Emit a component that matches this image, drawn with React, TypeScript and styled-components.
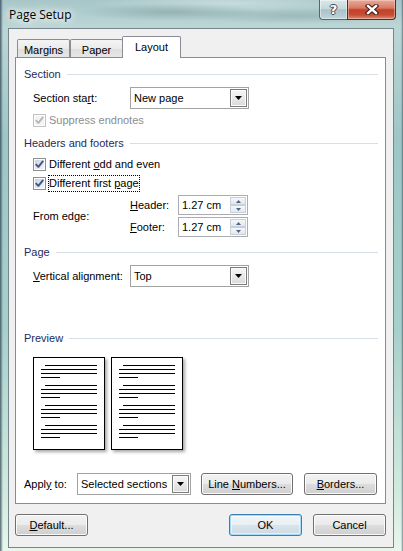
import React from 'react'
import styled, { createGlobalStyle, css } from 'styled-components'

const GlobalStyle = createGlobalStyle`
    html, body {
        margin: 0;
        padding: 0;
        background: #9fc3c5;
    }
    body {
        font-family: 'Liberation Sans', Arial, sans-serif;
        font-size: 11px;
        color: #000;
    }
    * {
        box-sizing: border-box;
    }
`

const Window = styled.div`
    width: 403px;
    height: 551px;
    display: flex;
    flex-direction: column;
    overflow: hidden;
    background:
        linear-gradient(90deg, rgba(35, 55, 75, 0.75) 0, rgba(35, 55, 75, 0) 3px),
        linear-gradient(270deg, rgba(35, 55, 75, 0.55) 0, rgba(35, 55, 75, 0) 2px),
        radial-gradient(ellipse 90px 9px at 170px 12px, rgba(80, 110, 115, 0.28), transparent),
        radial-gradient(ellipse 110px 8px at 300px 16px, rgba(80, 110, 115, 0.22), transparent),
        radial-gradient(ellipse 140px 10px at 230px 3px, rgba(255, 255, 255, 0.35), transparent),
        linear-gradient(180deg, #a6c6c8 0%, #bcd6d5 5%, #9ec6c5 25%, #a8d0cb 60%, #d2ebde 90%, #e8f6eb 100%);
`

const TitleBar = styled.div`
    height: 28px;
    flex: none;
    display: flex;
    justify-content: space-between;
    align-items: flex-start;
    padding: 0 7px 0 9px;
`

const Title = styled.span`
    margin-top: 6px;
    font-family: 'Open Sans', 'Noto Sans', sans-serif;
    font-size: 12px;
    color: #000;
    text-shadow: 0 0 6px #fff, 0 0 10px #fff, 0 0 14px rgba(255, 255, 255, 0.9);
`

const CaptionButtons = styled.div`
    display: flex;
`

const CaptionButton = styled.div<{ $close?: boolean }>`
    height: 20px;
    display: flex;
    align-items: center;
    justify-content: center;
    border: 1px solid #56656f;
    border-top: none;
    ${(p) =>
        p.$close
            ? css`
                  width: 49px;
                  border-color: #5a2a22;
                  border-radius: 0 0 4px 0;
                  background: linear-gradient(
                      180deg,
                      #e7ab9c 0%,
                      #d97a63 42%,
                      #c3412a 52%,
                      #c64c33 78%,
                      #dc8a73 100%
                  );
                  box-shadow: inset 0 0 0 1px rgba(255, 220, 210, 0.45);
              `
            : css`
                  width: 28px;
                  border-right: none;
                  border-radius: 0 0 0 4px;
                  background: linear-gradient(
                      180deg,
                      #dce8ea 0%,
                      #c5d7db 45%,
                      #a9c2c8 52%,
                      #bed5d9 100%
                  );
                  box-shadow: inset 0 0 0 1px rgba(255, 255, 255, 0.45);
              `}
`

const HelpGlyph = styled.span`
    font-family: 'DejaVu Sans', sans-serif;
    font-weight: bold;
    font-size: 13px;
    color: #fff;
    margin-top: -1px;
    text-shadow: 1px 0 #3a4d5a, -1px 0 #3a4d5a, 0 1px #3a4d5a, 0 -1px #3a4d5a;
`

const FrameBody = styled.div`
    flex: 1;
    display: flex;
    padding: 0 9px 4px 8px;
`

const Client = styled.div`
    flex: 1;
    display: flex;
    flex-direction: column;
    background: #f0f0f0;
    border: 1px solid #76868e;
    padding: 7px 7px 11px 6px;
`

const TabRow = styled.div`
    height: 21px;
    display: flex;
    align-items: flex-end;
    padding-left: 2px;
    position: relative;
    z-index: 1;
`

const Tab = styled.div<{ $w: number; $active?: boolean }>`
    width: ${(p) => p.$w}px;
    height: 18px;
    flex: none;
    display: flex;
    align-items: center;
    justify-content: center;
    padding-top: 2px;
    border: 1px solid #898c95;
    border-bottom: none;
    border-radius: 2px 2px 0 0;
    background: linear-gradient(180deg, #f4f4f4 0%, #ebebeb 50%, #dedede 51%, #e6e6e6 100%);
    ${(p) =>
        p.$active &&
        css`
            height: 22px;
            margin-left: -1px;
            margin-bottom: -1px;
            padding-top: 0;
            padding-bottom: 2px;
            background: #fff;
        `}
`

const Panel = styled.div`
    height: 447px;
    flex: none;
    display: flex;
    flex-direction: column;
    background: #fff;
    border: 1px solid #898c95;
    padding: 9px 7px 0 8px;
`

const Heading = styled.div<{ $mt: number }>`
    height: 14px;
    display: flex;
    align-items: center;
    margin-top: ${(p) => p.$mt}px;
    color: #1c2c5c;

    &::after {
        content: '';
        flex: 1;
        height: 1px;
        margin-left: 6px;
        background: #d5dfe5;
    }
`

const FieldRow = styled.div<{ $mt: number; $indent?: number }>`
    display: flex;
    align-items: center;
    margin-top: ${(p) => p.$mt}px;
    padding-left: ${(p) => p.$indent ?? 9}px;
`

const FieldLabel = styled.span<{ $w: number; $disabled?: boolean }>`
    width: ${(p) => p.$w}px;
    flex: none;
    color: ${(p) => (p.$disabled ? '#8d8d8d' : '#000')};
`

const Combo = styled.div<{ $w: number }>`
    width: ${(p) => p.$w}px;
    height: 22px;
    flex: none;
    display: flex;
    align-items: stretch;
    border: 1px solid #a2a2a2;
    background: #fff;
    padding: 1px;
`

const ComboText = styled.span`
    flex: 1;
    display: flex;
    align-items: center;
    padding-left: 2px;
`

const ComboButton = styled.span`
    width: 17px;
    display: flex;
    align-items: center;
    justify-content: center;
    border: 1px solid #7c7c7c;
    background: linear-gradient(180deg, #f7f7f7 0%, #e9e9e9 50%, #d9d9d9 100%);
    box-shadow: inset 0 0 0 1px #fafafa;
`

const CheckRow = styled.div<{ $mt: number }>`
    height: 18px;
    display: flex;
    align-items: center;
    margin-top: ${(p) => p.$mt}px;
    padding-left: 9px;
`

const CheckBox = styled.span<{ $disabled?: boolean }>`
    width: 13px;
    height: 13px;
    flex: none;
    display: flex;
    align-items: center;
    justify-content: center;
    border: 1px solid ${(p) => (p.$disabled ? '#c2c2c2' : '#8e8f8f')};
    background: ${(p) =>
        p.$disabled
            ? '#f4f4f4'
            : 'linear-gradient(135deg, #c9ced4 0%, #e4e6e9 55%, #f7f7f7 100%)'};
    box-shadow: inset 0 0 0 1px #fdfdfd;
`

const CheckLabel = styled.span<{ $focused?: boolean; $disabled?: boolean }>`
    margin-left: 2px;
    padding: 1px 0 1px 0;
    line-height: 13px;
    border: 1px ${(p) => (p.$focused ? 'dotted #000' : 'solid transparent')};
    color: ${(p) => (p.$disabled ? '#8d8d8d' : '#000')};
`

const EdgeBlock = styled.div<{ $mt: number }>`
    display: flex;
    align-items: center;
    margin-top: ${(p) => p.$mt}px;
    padding-left: 9px;
`

const SpinGrid = styled.div`
    display: grid;
    grid-template-columns: 48px 70px;
    row-gap: 2px;
    align-items: center;
`

const Spin = styled.div`
    height: 20px;
    display: flex;
    border: 1px solid #abadb3;
    background: #fff;
    padding: 1px;
`

const SpinText = styled.span`
    flex: 1;
    display: flex;
    align-items: center;
    padding-left: 2px;
`

const SpinButtons = styled.span`
    width: 16px;
    display: flex;
    flex-direction: column;
`

const SpinButton = styled.span`
    flex: 1;
    display: flex;
    align-items: center;
    justify-content: center;
    border: 1px solid #c9d0d8;
    background: linear-gradient(180deg, #f5f7f9 0%, #e3e8ee 100%);
`

const PreviewRow = styled.div<{ $mt: number }>`
    display: flex;
    gap: 6px;
    margin-top: ${(p) => p.$mt}px;
    padding-left: 9px;
`

const PageThumb = styled.div`
    width: 72px;
    height: 93px;
    flex: none;
    border: 1px solid #000;
    background: #fff;
    box-shadow: 2px 2px 3px rgba(0, 0, 0, 0.35);
`

const Button = styled.div<{ $w: number; $default?: boolean; $ml?: number }>`
    width: ${(p) => p.$w}px;
    height: 22px;
    flex: none;
    display: flex;
    align-items: center;
    justify-content: center;
    margin-left: ${(p) => (p.$ml === undefined ? '0' : `${p.$ml}px`)};
    border: 1px solid #707070;
    border-radius: 3px;
    background: linear-gradient(180deg, #f2f2f2 0%, #ebebeb 48%, #dddddd 52%, #cfcfcf 100%);
    box-shadow: inset 0 0 0 1px rgba(255, 255, 255, 0.85);
    ${(p) =>
        p.$default &&
        css`
            border-color: #3c7fb1;
            background: linear-gradient(180deg, #f1f6f9 0%, #e8eff4 48%, #d9e3ea 52%, #cdd9e2 100%);
            box-shadow: inset 0 0 0 1px #a6d9f5, inset 0 0 0 2px rgba(255, 255, 255, 0.5);
        `}
`

const ButtonBar = styled.div`
    display: flex;
    align-items: center;
    margin-top: 10px;
`

const Spacer = styled.div`
    flex: 1;
`

const DownArrow = () => (
    <svg width="7" height="4" viewBox="0 0 7 4">
        <path d="M0 0h7L3.5 4z" fill="#000" />
    </svg>
)

const SpinArrow = ({ up }: { up?: boolean }) => (
    <svg width="5" height="3" viewBox="0 0 5 3">
        <path d={up ? 'M0 3h5L2.5 0z' : 'M0 0h5L2.5 3z'} fill="#4d6489" />
    </svg>
)

const CheckMark = ({ disabled }: { disabled?: boolean }) => (
    <svg width="11" height="11" viewBox="0 0 11 11">
        <path
            d="M2.2 5.6 L4.4 7.9 L8.8 2.4"
            fill="none"
            stroke={disabled ? '#b5b5b5' : '#3a5592'}
            strokeWidth="1.9"
            strokeLinecap="round"
            strokeLinejoin="round"
        />
    </svg>
)

const CloseGlyph = () => (
    <svg width="14" height="11" viewBox="0 0 14 11">
        <path d="M3 2 L11 9 M11 2 L3 9" stroke="#3b1a14" strokeWidth="4.4" strokeLinecap="square" />
        <path d="M3 2 L11 9 M11 2 L3 9" stroke="#fff" strokeWidth="2.4" strokeLinecap="square" />
    </svg>
)

const PageLines = () => {
    const paragraphs = [0, 1, 2, 3]
    return (
        <svg width="70" height="91" viewBox="0 0 70 91">
            {paragraphs.map((i) => {
                const y = 7.5 + i * 20
                return (
                    <g key={i} stroke="#000" strokeWidth="1">
                        <line x1="11" y1={y} x2="63" y2={y} />
                        <line x1="7" y1={y + 4} x2="63" y2={y + 4} />
                        <line x1="7" y1={y + 8} x2="63" y2={y + 8} />
                        <line x1="7" y1={y + 12} x2="26" y2={y + 12} />
                    </g>
                )
            })}
        </svg>
    )
}

const ComboBox = ({ w, value }: { w: number; value: string }) => (
    <Combo $w={w}>
        <ComboText>{value}</ComboText>
        <ComboButton>
            <DownArrow />
        </ComboButton>
    </Combo>
)

const SpinBox = ({ value }: { value: string }) => (
    <Spin>
        <SpinText>{value}</SpinText>
        <SpinButtons>
            <SpinButton>
                <SpinArrow up />
            </SpinButton>
            <SpinButton>
                <SpinArrow />
            </SpinButton>
        </SpinButtons>
    </Spin>
)

export default function App() {
    return (
        <>
            <GlobalStyle />
            <Window>
                <TitleBar>
                    <Title>Page Setup</Title>
                    <CaptionButtons>
                        <CaptionButton>
                            <HelpGlyph>?</HelpGlyph>
                        </CaptionButton>
                        <CaptionButton $close>
                            <CloseGlyph />
                        </CaptionButton>
                    </CaptionButtons>
                </TitleBar>
                <FrameBody>
                    <Client>
                        <TabRow>
                            <Tab $w={53}>Margins</Tab>
                            <Tab $w={53}>Paper</Tab>
                            <Tab $w={59} $active>
                                Layout
                            </Tab>
                        </TabRow>
                        <Panel>
                            <Heading $mt={0}>Section</Heading>
                            <FieldRow $mt={6}>
                                <FieldLabel $w={97}>
                                    Section sta<u>r</u>t:
                                </FieldLabel>
                                <ComboBox w={119} value="New page" />
                            </FieldRow>
                            <CheckRow $mt={2}>
                                <CheckBox $disabled>
                                    <CheckMark disabled />
                                </CheckBox>
                                <CheckLabel $disabled>Suppress endnotes</CheckLabel>
                            </CheckRow>

                            <Heading $mt={7}>Headers and footers</Heading>
                            <CheckRow $mt={5}>
                                <CheckBox>
                                    <CheckMark />
                                </CheckBox>
                                <CheckLabel>
                                    Different <u>o</u>dd and even
                                </CheckLabel>
                            </CheckRow>
                            <CheckRow $mt={1}>
                                <CheckBox>
                                    <CheckMark />
                                </CheckBox>
                                <CheckLabel $focused>
                                    Different first <u>p</u>age
                                </CheckLabel>
                            </CheckRow>
                            <EdgeBlock $mt={3}>
                                <FieldLabel $w={97}>From edge:</FieldLabel>
                                <SpinGrid>
                                    <span>
                                        <u>H</u>eader:
                                    </span>
                                    <SpinBox value="1.27 cm" />
                                    <span>
                                        <u>F</u>ooter:
                                    </span>
                                    <SpinBox value="1.27 cm" />
                                </SpinGrid>
                            </EdgeBlock>

                            <Heading $mt={8}>Page</Heading>
                            <FieldRow $mt={6}>
                                <FieldLabel $w={97}>
                                    <u>V</u>ertical alignment:
                                </FieldLabel>
                                <ComboBox w={119} value="Top" />
                            </FieldRow>

                            <Heading $mt={44}>Preview</Heading>
                            <PreviewRow $mt={12}>
                                <PageThumb>
                                    <PageLines />
                                </PageThumb>
                                <PageThumb>
                                    <PageLines />
                                </PageThumb>
                            </PreviewRow>

                            <FieldRow $mt={23} $indent={0}>
                                <FieldLabel $w={53}>
                                    Appl<u>y</u> to:
                                </FieldLabel>
                                <ComboBox w={114} value="Selected sections" />
                                <Button $w={92} $ml={10}>
                                    <span>
                                        Line <u>N</u>umbers...
                                    </span>
                                </Button>
                                <Button $w={73} $ml={11}>
                                    <span>
                                        <u>B</u>orders...
                                    </span>
                                </Button>
                            </FieldRow>
                        </Panel>
                        <ButtonBar>
                            <Button $w={73}>
                                <span>
                                    <u>D</u>efault...
                                </span>
                            </Button>
                            <Spacer />
                            <Button $w={73} $default>
                                OK
                            </Button>
                            <Button $w={73} $ml={11}>
                                Cancel
                            </Button>
                        </ButtonBar>
                    </Client>
                </FrameBody>
            </Window>
        </>
    )
}
